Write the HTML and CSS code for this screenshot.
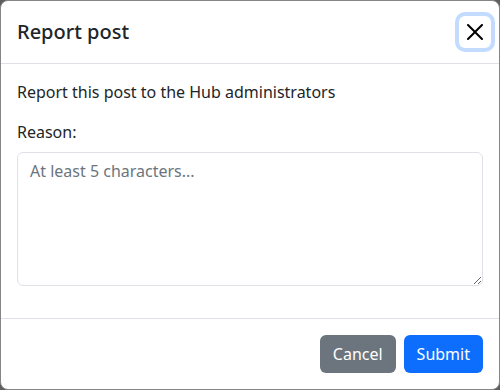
FILE: index.html
```html
<!DOCTYPE html>
<html>
<head>
  <meta charset="UTF-8">
  <meta name="viewport" content="width=device-width, initial-scale=1">
  <title>Report post</title>
  <link rel="stylesheet" href="styles.css">
</head>
<body>
  <div class="modal">
    <div class="modal-header">
      <h5 class="modal-title">Report post</h5>
      <button type="button" class="btn-close" aria-label="Close">
        <svg viewBox="0 0 16 16" width="16" height="16"><path fill="#000" d="M.293.293a1 1 0 0 1 1.414 0L8 6.586 14.293.293a1 1 0 1 1 1.414 1.414L9.414 8l6.293 6.293a1 1 0 0 1-1.414 1.414L8 9.414l-6.293 6.293a1 1 0 0 1-1.414-1.414L6.586 8 .293 1.707a1 1 0 0 1 0-1.414z"/></svg>
      </button>
    </div>
    <div class="modal-body">
      <p>Report this post to the Hub administrators</p>
      <label for="reason">Reason:</label>
      <textarea id="reason" rows="5" placeholder="At least 5 characters..."></textarea>
    </div>
    <div class="modal-footer">
      <button type="button" class="btn btn-secondary">Cancel</button>
      <button type="button" class="btn btn-primary">Submit</button>
    </div>
  </div>
</body>
</html>
```

FILE: styles.css
```css
html, body {
  height: 100%;
}
body {
  margin: 0;
  background: #5e5e5e;
  font-family: "Noto Sans", sans-serif;
  font-size: 16px;
  line-height: 1.5;
  color: #212529;
  overflow: hidden;
}
.modal {
  width: 500px;
  background: #fff;
  border: 1px solid #858585;
  border-radius: 8px;
  box-sizing: border-box;
}
.modal-header {
  display: flex;
  align-items: center;
  padding: 16px;
  border-bottom: 1px solid #dee2e6;
}
.modal-title {
  margin: 0;
  font-size: 20px;
  font-weight: 500;
  line-height: 30px;
}
.btn-close {
  margin: -8px -8px -8px auto;
  width: 32px;
  height: 32px;
  padding: 0;
  display: flex;
  align-items: center;
  justify-content: center;
  background: transparent;
  border: 0;
  border-radius: 6px;
  box-shadow: 0 0 0 4px rgba(13, 110, 253, 0.25);
}
.modal-body {
  padding: 16px;
}
.modal-body p {
  margin: 0 0 16px;
}
label {
  display: block;
  margin-bottom: 8px;
}
textarea {
  display: block;
  width: 100%;
  box-sizing: border-box;
  height: 134px;
  padding: 6px 12px;
  margin-bottom: 16px;
  font-family: inherit;
  font-size: 16px;
  line-height: 1.5;
  color: #212529;
  border: 1px solid #dee2e6;
  border-radius: 6px;
  resize: vertical;
}
textarea::placeholder {
  color: #6c757d;
}
.modal-footer {
  display: flex;
  justify-content: flex-end;
  padding: 12px;
  border-top: 1px solid #dee2e6;
}
.btn {
  margin: 4px;
  padding: 6px 12px;
  font-family: inherit;
  font-size: 16px;
  line-height: 1.5;
  color: #fff;
  border: 1px solid transparent;
  border-radius: 6px;
}
.btn-secondary {
  background: #6c757d;
}
.btn-primary {
  background: #0d6efd;
}
```
